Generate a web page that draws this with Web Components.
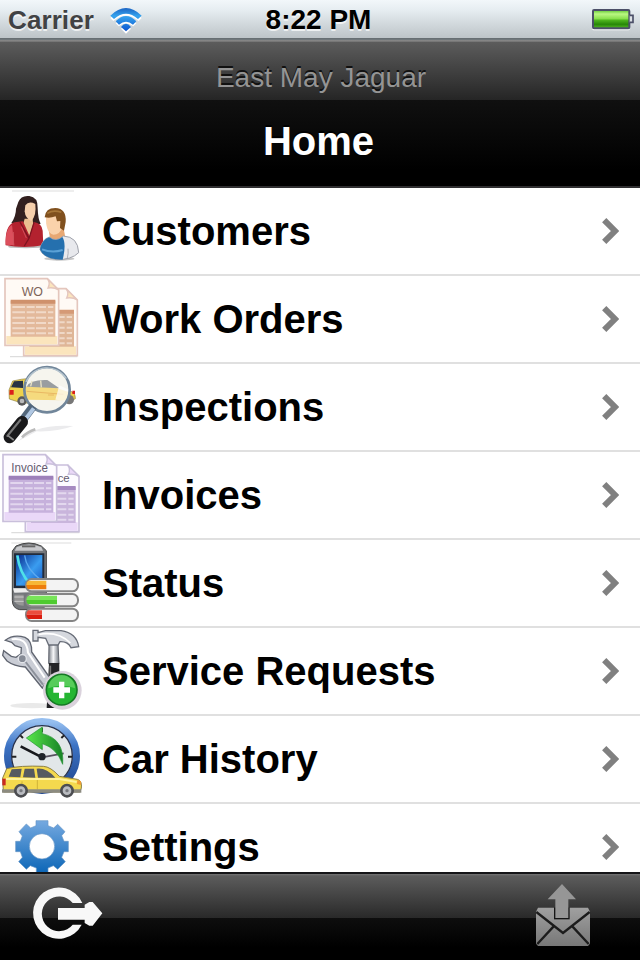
<!DOCTYPE html>
<html lang="en">
<head>
<meta charset="utf-8">
<title>Home</title>
<style>
  body { margin: 0; background: #000; font-family: "Liberation Sans", Arial, sans-serif; }
</style>
</head>
<body>
<app-screen>
  <status-bar slot="top" carrier="Carrier" time="8:22 PM"></status-bar>
  <nav-bar slot="top" prompt="East May Jaguar">Home</nav-bar>
  <menu-row icon="customers">Customers</menu-row>
  <menu-row icon="orders">Work Orders</menu-row>
  <menu-row icon="inspections">Inspections</menu-row>
  <menu-row icon="invoices">Invoices</menu-row>
  <menu-row icon="status">Status</menu-row>
  <menu-row icon="service">Service Requests</menu-row>
  <menu-row icon="history">Car History</menu-row>
  <menu-row icon="settings">Settings</menu-row>
  <tool-bar slot="bottom"></tool-bar>
</app-screen>

<script>
// sheet of paper with a table, used by work orders and invoices
const sheet = (x, y, w, h, line, head, body, foot, paper) => `
  <path d="M${x} ${y}h${w - 34}l34 34v${h - 34}h-${w}z" fill="${paper}" stroke="${line}" stroke-width="5"/>
  <path d="M${x + 4} ${y + h - 28}h${w - 8}v25h-${w - 8}z" fill="${foot}"/>
  <path d="M${x + 17} ${y + 66}h${w - 27}v108h-${w - 27}z" fill="${body}"/>
  <path d="M${x + 17} ${y + 63}h${w - 27}v12h-${w - 27}z" fill="${head}"/>
  <path d="M${x + 22} ${y + 85}h${w - 38}m-${w - 38} 16h${w - 38}m-${w - 38} 16h${w - 38}m-${w - 38} 16h${w - 38}m-${w - 38} 16h${w - 38}m-${w - 38} 15h${w - 38}"
    stroke="${paper}" stroke-width="6" stroke-dasharray="38 5 24 4 30 6" opacity=".5" fill="none"/>
  <path d="M${x + w - 34} ${y}q10 12 2 28q18-3 32 6z" fill="${foot}" stroke="${line}" stroke-width="4"/>`;

// yellow estate car with its wheels
const car = `
  <path d="M8 192L20 164Q60 154 130 157Q152 158 178 187L232 196Q247 200 244 222L240 234H10Z" fill="#f4d94e" stroke="#8c8048" stroke-width="3"/>
  <path d="M26 188l9-22 30-2-4 26zM69 190l5-26h28l4 27zM110 164q28-4 56 27h-52z" fill="#565a60"/>
  <path d="M18 195h160l52 9" stroke="#fff29a" stroke-width="6" fill="none"/>
  <path d="M66 202v24m46-28v28" stroke="#bd9e2e" stroke-width="2"/>
  <path d="M6 226h238v10H6z" fill="#8c8b80"/>
  <path d="M7 194h10v20H7z" fill="#c9281e"/><path d="M232 198l11 4v11l-12-3z" fill="#ef9d35"/>
  <g fill="#b9bbc0" stroke="#4c4d51" stroke-width="8"><circle cx="63" cy="230" r="17"/><circle cx="201" cy="230" r="17"/></g>
  <g fill="#77797e"><circle cx="63" cy="230" r="5"/><circle cx="201" cy="230" r="5"/></g>`;

const bar = (y, w, a, b) => `
  <rect x="78" y="${y}" width="156" height="37" rx="17" fill="#f3f3f3" stroke="#858585" stroke-width="6"/>
  <path d="M85 ${y + 5}h${w}v13h-${w + 6}q0-9 6-13z" fill="${a}"/>
  <path d="M79 ${y + 18}h${w + 6}v13h-${w}q-6-4-6-13z" fill="${b}"/>`;

const icons = {
  customers: `
    <path d="M36 15H222" stroke="#ddd" stroke-width="3"/>
    <ellipse cx="78" cy="182" rx="54" ry="5" fill="#bbb"/>
    <path d="M55 48Q63 27 88 30Q114 33 113 66Q114 100 122 113L70 128L34 111Q48 90 48 68Z" fill="#33201f"/>
    <path d="M74 98h24l2 22-12 32-20-33z" fill="#eabf91"/>
    <path d="M76 58Q86 44 106 54Q110 88 94 105Q76 98 74 76Z" fill="#f6cfac"/>
    <path d="M17 178Q14 118 43 109L69 106L89 151L101 108Q126 112 128 134L130 178Q72 188 17 178Z" fill="#b3222f"/>
    <path d="M17 176Q16 126 36 117L43 178Z" fill="#dc4f5c"/>
    <path d="M60 108l27 49-14 23m29-70-15 47" stroke="#7c1320" stroke-width="4" fill="none"/>
    <path d="M64 122l15 34m-38 22-1-40" stroke="#d0505a" stroke-width="3" fill="none"/>
    <ellipse cx="178" cy="218" rx="45" ry="6" fill="#c6c6c6"/>
    <path d="M146 132L190 122 196 154 172 166 150 156z" fill="#e8a873"/>
    <path d="M138 92Q148 74 176 78Q196 86 188 122Q180 146 160 146Q136 138 138 92Z" fill="#fad2ab"/>
    <path d="M134 94Q136 66 166 66Q200 68 197 108L192 134L180 126L181 105L171 106L167 91Q150 98 134 94Z" fill="#80501e"/>
    <path d="M142 82q18-12 42-3" stroke="#a67638" stroke-width="5" fill="none"/>
    <path d="M148 153Q168 170 190 150Q234 152 236 200Q214 222 168 221Q126 211 120 190Q126 160 148 153Z" fill="#e8e9ed" stroke="#9ea1aa" stroke-width="3"/>
    <path d="M148 154Q168 170 187 153Q200 172 188 221Q130 220 120 190Q126 160 148 154Z" fill="#2570ae"/>
    <path d="M126 190q30 12 62 2" stroke="#5ba1d6" stroke-width="6" fill="none"/>
    <path d="M202 216q4-14 2-28" stroke="#aeb0b8" stroke-width="3" fill="none"/>`,

  orders: `
    <path d="M30 248H232" stroke="#ddd" stroke-width="4"/>
    ${sheet(71, 44, 161, 201, '#e4c6bd', '#d59a76', '#dfb697', '#fbe5bd', '#fffaf5')}
    ${sheet(15, 14, 161, 200, '#e4c6bd', '#cf916c', '#e3b99b', '#fbe5bd', '#fffaf5')}
    <text x="65" y="65" font-size="37" textLength="64" lengthAdjust="spacingAndGlyphs" fill="#7d6459">WO</text>`,

  inspections: `
    <path d="M55 238Q100 185 220 192Q170 210 110 208Z" fill="#ebebed"/>
    <path d="M66 226q16-16 40-24" stroke="#bbb" stroke-width="8" fill="none"/>
    <path d="M27 84L38 57Q90 44 142 52L174 78Q230 84 226 110L212 118L150 118L68 124L28 111Z" fill="#eed14c" stroke="#8e803e" stroke-width="2"/>
    <path d="M33 76l9-18 27-2v22z" fill="#273244"/><path d="M29 84h12v14H28zM217 86h8v10h-8z" fill="#dc1f1c"/>
    <circle cx="66" cy="117" r="14" fill="#5a5a5a"/><circle cx="66" cy="117" r="7" fill="#bbb"/>
    <circle cx="208" cy="113" r="14" fill="#777"/>
    <circle cx="141" cy="83" r="67" fill="#f6f5ee"/>
    <path d="M74 74Q132 62 170 78L206 90 200 115 78 113Z" fill="#f5da7e"/>
    <path d="M80 74q10-22 62-20l36 25z" fill="#999da0"/><path d="M92 73l4-16m28 19-2-20" stroke="#e9e3c6" stroke-width="4"/>
    <path d="M80 88l110 9M144 99h18" stroke="#e9b863" stroke-width="3"/>
    <path d="M178 70l30 14-8 33-34-4z" fill="#fff" opacity=".7"/>
    <circle cx="141" cy="83" r="68" fill="none" stroke="#71869a" stroke-width="8"/>
    <path d="M78 60A68 68 0 0 1 199 50" fill="none" stroke="#b7c6d0" stroke-width="4"/>
    <path d="M100 132L66 177" stroke="#53677b" stroke-width="25"/><path d="M101 139L77 171" stroke="#b1c8e3" stroke-width="12"/>
    <path d="M66 180L29 226" stroke="#19191b" stroke-width="36" stroke-linecap="round"/>
    <path d="M61 174L22 222" stroke="#777" stroke-width="6" stroke-linecap="round"/>
    <path d="M24 221l17 13" stroke="#8b8b8b" stroke-width="5"/>`,

  invoices: `
    <path d="M34 248H238" stroke="#ddd" stroke-width="4"/>
    ${sheet(76, 45, 161, 200, '#c9bfdb', '#a68ac1', '#c9b5dc', '#ead8f8', '#fdfbff')}
    <text x="173" y="97" font-size="34" textLength="36" lengthAdjust="spacingAndGlyphs" fill="#635a70">ce</text>
    ${sheet(9, 14, 161, 200, '#c9bfdb', '#9d80ba', '#c6b1dc', '#ead8f8', '#fdfbff')}
    <text x="34" y="66" font-size="36" textLength="110" lengthAdjust="spacingAndGlyphs" fill="#635a70">Invoice</text>`,

  status: `
    <defs><linearGradient id="lcd" x2="1" y2="1"><stop stop-color="#07298b"/><stop offset=".55" stop-color="#3a9df0"/><stop offset="1" stop-color="#1551bc"/></linearGradient></defs>
    <path d="M34 15H214" stroke="#ddd" stroke-width="3"/>
    <path d="M48 24Q86 6 124 24L139 38V196Q138 215 105 215H59Q37 211 37 187V39Z" fill="#74777b" stroke="#444" stroke-width="3"/>
    <path d="M50 27q38-15 74 0l5 11H44z" fill="#c8c9cc"/><path d="M66 25h40" stroke="#666" stroke-width="6"/>
    <path d="M42 46h91v104H42z" fill="#222b3b"/><path d="M48 51h79v92H48z" fill="url(#lcd)"/>
    <path d="M52 52q6 50 39 88" stroke="#4ee1e9" stroke-width="8" fill="none"/>
    <path d="M74 52q4 40 49 74" stroke="#5aa9f0" stroke-width="4" fill="none"/>
    <path d="M39 151h98v10l-94 3z" fill="#ededed"/>
    <path d="M43 170h28v33q-27-2-28-18z" fill="#969696"/><path d="M43 177h28m-28 13h28" stroke="#ccc" stroke-width="3"/>
    ${bar(123, 54, '#f7b636', '#ed7d0c')}
    ${bar(168, 86, '#78e459', '#4fcb30')}
    ${bar(212, 41, '#eb4d3e', '#d91d10')}`,

  service: `
    <defs><linearGradient id="steel"><stop stop-color="#7f848c"/><stop offset=".45" stop-color="#f6f7f9"/><stop offset="1" stop-color="#737982"/></linearGradient></defs>
    <ellipse cx="96" cy="239" rx="65" ry="8" fill="#e9e9e9"/>
    <path d="M147 53h27l3 60h-31z" fill="url(#steel)" stroke="#5f636c" stroke-width="3"/>
    <path d="M147 111h31v135h-38z" fill="#232427"/><path d="M151 119v55" stroke="#777" stroke-width="5"/>
    <path d="M99 13h15v7l22-6h47Q230 21 236 62L213 65Q204 46 180 47L174 57H146L137 37 114 34V45H99Z" fill="#d5d8de" stroke="#676c77" stroke-width="4"/>
    <path d="M116 25q60-10 95 26" stroke="#fff" stroke-width="5" fill="none"/>
    <path d="M16 43Q39 24 75 34Q96 43 95 78L148 153L127 186L76 123Q42 121 21 105L8 88L11 74L34 91L48 94L63 83L64 65L45 59L35 49Z" fill="#cacdd5" stroke="#606570" stroke-width="4"/>
    <path d="M35 40q45-8 49 40l50 75" stroke="#fff" stroke-width="6" fill="none"/>
    <path d="M77 108l52 68" stroke="#8c919b" stroke-width="6"/>
    <circle cx="67" cy="98" r="12" fill="#868b96" stroke="#e2e4e9" stroke-width="4"/>
    <circle cx="187" cy="193" r="58" fill="#dad2dc"/>
    <circle cx="185" cy="191" r="46" fill="#25b532" stroke="#167925" stroke-width="5"/>
    <path d="M145 187a40 40 0 0 1 80 0q-40-17-80 0" fill="#79dc75" opacity=".6"/>
    <path d="M185 167v50M160 192h50" stroke="#fff" stroke-width="16"/>`,

  history: `
    <defs><linearGradient id="rim" x2="0" y2="1"><stop stop-color="#96bff0"/><stop offset=".35" stop-color="#3c73c4"/><stop offset="1" stop-color="#1d438c"/></linearGradient>
    <linearGradient id="arr"><stop stop-color="#59e84a"/><stop offset="1" stop-color="#178226"/></linearGradient></defs>
    <circle cx="126" cy="126" r="103" fill="#e2e7e9" stroke="url(#rim)" stroke-width="22"/>
    <circle cx="126" cy="126" r="91" fill="none" stroke="#25304d" stroke-width="4"/>
    <path d="M36 128h13m155 0h12M126 42v12M61 64l8 8m123-8-8 8" stroke="#222" stroke-width="6"/>
    <path d="M62 97L126 130" stroke="#17181c" stroke-width="8"/><path d="M126 130L191 118" stroke="#57515f" stroke-width="5"/>
    <circle cx="126" cy="128" r="11" fill="#20242a"/>
    <path d="M127 39V59Q194 74 188 151Q170 102 127 89V107L79 72Z" fill="url(#arr)" stroke="#239332" stroke-width="2"/>
    ${car}`,

  settings: `
    <defs><linearGradient id="gear" x2="0" y2="1"><stop stop-color="#75a9e0"/><stop offset="1" stop-color="#0c66b7"/></linearGradient></defs>
    <path fill-rule="evenodd" fill="url(#gear)" stroke="#6796c6" stroke-width="2"
      d="M108 56H144V71L161 78L173 67L195 89L185 101L192 118H205V149H192L185 166L196 179L173 202L160 191L144 198V213H109V198L91 191L79 202L56 179L67 166L61 149H47V118H61L67 102L57 89L79 66L92 78L108 71ZM126 95A38 38 0 1 0 126 171A38 38 0 1 0 126 95Z"/>`
};

class AppScreen extends HTMLElement {
  constructor() {
    super();
    this.attachShadow({ mode: 'open' }).innerHTML = `
      <style>
        :host { display: flex; flex-direction: column; width: 640px; height: 960px; overflow: hidden; }
        main { flex: 1; min-height: 0; overflow: hidden; background: #fff; }
      </style>
      <slot name="top"></slot>
      <main><slot></slot></main>
      <slot name="bottom"></slot>`;
  }
}

class StatusBar extends HTMLElement {
  constructor() {
    super();
    this.attachShadow({ mode: 'open' }).innerHTML = `
      <style>
        :host { display: grid; grid-template-columns: 1fr auto 1fr; height: 40px; box-sizing: border-box;
          background: linear-gradient(#f2f7fa 0, #e6edf1 10px, #bdc4c8 38px, #636b6f 38px, #737b7f 40px);
          font-weight: bold; text-shadow: 0 2px 0 rgba(255,255,255,.7); }
        .left { display: flex; gap: 14px; padding-left: 8px; }
        .carrier { font-size: 26px; line-height: 40px; color: #414244; width: 86px; letter-spacing: .1px; }
        .time { font-size: 28px; line-height: 39px; color: #000; padding-right: 3px; }
        .right { display: flex; justify-content: flex-end; padding-right: 4px; }
        svg { display: block; }
      </style>
      <div class="left">
        <span class="carrier"></span>
        <svg width="36" height="38" viewBox="324 0 108 114">
          <defs><linearGradient id="w" x2="0" y2="1"><stop stop-color="#1b64c4"/><stop offset=".35" stop-color="#36a4ee"/><stop offset="1" stop-color="#0b54cf"/></linearGradient></defs>
          <path d="M331 50Q378 10 425 50L416 59Q378 28 340 59ZM347 66Q378 40 409 66L400 75Q378 58 356 75ZM363 82Q378 66 393 82L378 97Z" fill="#fff" transform="translate(0 4)"/>
          <path d="M331 47Q378 1 425 47L414 57Q378 26 342 57ZM347 64Q378 32 409 64L399 74Q378 56 357 74ZM363 81Q378 62 393 81L378 94Z" fill="url(#w)"/>
        </svg>
      </div>
      <span class="time"></span>
      <div class="right">
        <svg width="46" height="38" viewBox="810 0 138 114">
          <defs><linearGradient id="b" x2="0" y2="1"><stop stop-color="#5cc52f"/><stop offset=".22" stop-color="#baf783"/><stop offset=".48" stop-color="#88df4c"/><stop offset=".55" stop-color="#4fb61f"/><stop offset=".78" stop-color="#278708"/><stop offset="1" stop-color="#55bb25"/></linearGradient></defs>
          <rect x="817" y="32" width="112" height="59" rx="4" fill="#fff"/>
          <rect x="819" y="30" width="109" height="55" rx="3" fill="url(#b)" stroke="#4b4f68" stroke-width="6"/>
          <path d="M929 46h10v21h-10" fill="#dce1e5" stroke="#4b4f68" stroke-width="5"/>
        </svg>
      </div>`;
    this.shadowRoot.querySelector('.carrier').textContent = this.getAttribute('carrier');
    this.shadowRoot.querySelector('.time').textContent = this.getAttribute('time');
  }
}

class NavBar extends HTMLElement {
  constructor() {
    super();
    this.attachShadow({ mode: 'open' }).innerHTML = `
      <style>
        :host { display: flex; flex-direction: column; align-items: center; gap: 24px; height: 148px;
          box-sizing: border-box; padding-top: 22px; border-bottom: 2px solid #302f31;
          background: linear-gradient(#8b8b8b 0, #707070 2px, #5c5c5c 2px, #252525 60px, #101010 60px, #000 130px); }
        .prompt { font-size: 28px; line-height: 32px; color: #949494; text-shadow: 0 -2px 0 #111; padding-left: 2px; }
        .title { font-size: 40px; line-height: 46px; font-weight: bold; color: #fff; text-shadow: 0 -2px 0 #000; padding-right: 3px; }
      </style>
      <div class="prompt"></div>
      <div class="title"><slot></slot></div>`;
    this.shadowRoot.querySelector('.prompt').textContent = this.getAttribute('prompt');
  }
}

class MenuRow extends HTMLElement {
  constructor() {
    super();
    this.attachShadow({ mode: 'open' }).innerHTML = `
      <style>
        :host { display: flex; align-items: center; height: 88px; box-sizing: border-box;
          border-bottom: 2px solid #e0e0e0; padding-right: 21px; background: #fff; color: #000; }
        .icon { width: 84px; height: 86px; margin-right: 18px; flex: none; }
        .label { flex: 1; font-size: 40px; line-height: 86px; font-weight: bold; white-space: nowrap; }
      </style>
      <svg class="icon" viewBox="0 6 252 258">${icons[this.getAttribute('icon')]}</svg>
      <span class="label"><slot></slot></span>
      <svg width="17" height="26" viewBox="0 0 17 26"><path d="M2.2 2.2L13 13L2.2 23.8" fill="none" stroke="#808080" stroke-width="6"/></svg>`;
  }
}

class ToolBar extends HTMLElement {
  constructor() {
    super();
    this.attachShadow({ mode: 'open' }).innerHTML = `
      <style>
        :host { display: flex; justify-content: space-between; height: 88px;
          background: linear-gradient(#151517 0, #151517 2px, #757575 2px, #5c5c5c 4px, #292929 46px, #0e0e0e 46px, #000 75px); }
        svg { display: block; }
      </style>
      <svg width="120" height="88" viewBox="0 210 360 264">
        <path d="M247 301L233 307A64 64 0 1 0 233 364L247 369" fill="none" stroke="none"/>
        <path d="M247 303A77 77 0 1 0 245 368H218A52 52 0 1 1 218 303Z" fill="#f8f8f8"/>
        <path d="M174 318H254V308L268 300H278L307 334L278 371H268L254 363V353H174Z" fill="#f8f8f8"/>
      </svg>
      <svg width="120" height="88" viewBox="0 216 360 264">
        <defs><linearGradient id="m" x2="0" y2="1"><stop stop-color="#a0a0a0"/><stop offset="1" stop-color="#777"/></linearGradient></defs>
        <path d="M54 323H204L210 335V431L204 438H54L48 431V335Z" fill="url(#m)"/>
        <path d="M49 336L129 399L209 336M52 432L101 379M206 432L157 379" fill="none" stroke="#1c1c1c" stroke-width="7"/>
        <path d="M102 322V358H149V322" fill="#151515"/>
        <path d="M126 252L168 298H145V354H106V298H83Z" fill="#969696"/>
      </svg>`;
  }
}

customElements.define('app-screen', AppScreen);
customElements.define('status-bar', StatusBar);
customElements.define('nav-bar', NavBar);
customElements.define('menu-row', MenuRow);
customElements.define('tool-bar', ToolBar);
</script>
</body>
</html>
